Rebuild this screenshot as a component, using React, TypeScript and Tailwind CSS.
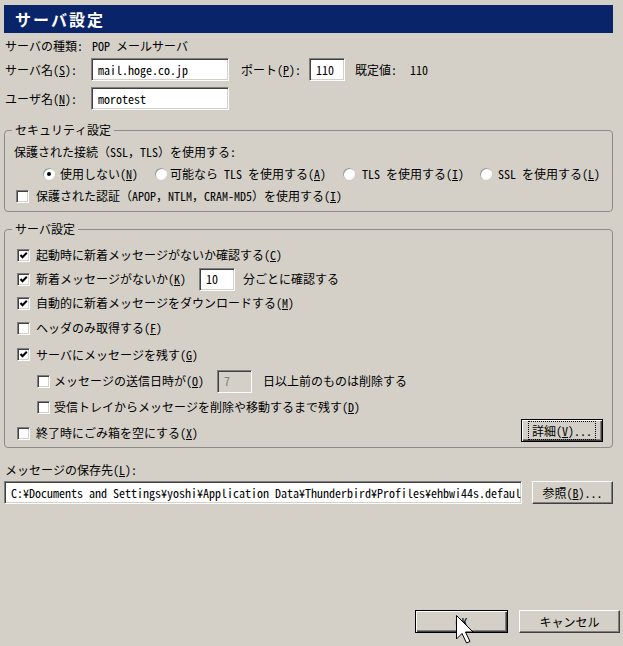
import React from "react"

function U({ children }: { children: React.ReactNode }) {
  return <span className="underline underline-offset-[1px]">{children}</span>
}

function Sunken({ className, children }: { className?: string; children?: React.ReactNode }) {
  return (
    <div
      className={
        "h-[23px] shrink-0 border border-t-[#808080] border-l-[#808080] border-r-white border-b-white shadow-[inset_1px_1px_0_#404040,inset_-1px_-1px_0_#d4d0c8] flex items-center px-[6px] overflow-hidden whitespace-nowrap " +
        (className || "")
      }
    >
      <span>{children}</span>
    </div>
  )
}

function Check({ on }: { on?: boolean }) {
  return (
    <span className="w-[13px] h-[13px] shrink-0 bg-white border border-t-[#808080] border-l-[#808080] border-r-white border-b-white shadow-[inset_1px_1px_0_#404040,inset_-1px_-1px_0_#d4d0c8] flex items-center justify-center">
      {on && (
        <svg width="9" height="9" viewBox="0 0 9 9">
          <polyline points="1.5,4 3.5,6.2 7.8,1.8" fill="none" stroke="#000" strokeWidth="2" />
        </svg>
      )}
    </span>
  )
}

function Radio({ on }: { on?: boolean }) {
  return (
    <span className="w-[12px] h-[12px] shrink-0 rounded-full bg-white flex items-center justify-center shadow-[inset_1px_1px_0_#9a9a9a,inset_-1px_-1px_0_#f4f4f4,0_0_1px_#bdbab0]">
      {on && <span className="w-[4px] h-[4px] rounded-full bg-black" />}
    </span>
  )
}

function Btn({ className, children, def }: { className?: string; children: React.ReactNode; def?: boolean }) {
  const look = def
    ? "border border-black shadow-[inset_1px_1px_0_#ffffff,inset_-1px_-1px_0_#404040,inset_-2px_-2px_0_#808080]"
    : "border border-t-white border-l-white border-r-[#404040] border-b-[#404040] shadow-[inset_-1px_-1px_0_#808080]"
  return (
    <div className={"h-[23px] shrink-0 bg-[#d4d0c8] flex items-center justify-center " + look + " " + (className || "")}>
      <span>{children}</span>
    </div>
  )
}

function Row({ className, children }: { className?: string; children: React.ReactNode }) {
  return <div className={"flex items-center whitespace-nowrap " + (className || "")}>{children}</div>
}

export default function App() {
  return (
    <div className="relative w-[623px] h-[646px] overflow-hidden bg-[#d4d0c8] pt-[5px] pl-[4px] pr-[10px] pb-[13px] flex flex-col text-[12px] leading-[14px] text-black font-['Noto_Sans_Mono_CJK_JP','Noto_Sans_CJK_JP',monospace]">
      <div className="h-[28px] shrink-0 bg-[#0a246a] flex items-center pl-[11px] text-white text-[16px] leading-[20px] font-bold tracking-[2px]">
        サーバ設定
      </div>

      <Row className="h-[20px] mt-[3px]">
        <span className="w-[88px] pl-[1px]">サーバの種類:</span>
        <span>POP メールサーバ</span>
      </Row>

      <Row className="mt-[2px]">
        <span className="w-[87px] pl-[1px]">
          サーバ名(<U>S</U>):
        </span>
        <Sunken className="w-[138px] bg-white">mail.hoge.co.jp</Sunken>
        <span className="ml-[12px] w-[68px]">
          ポート(<U>P</U>):
        </span>
        <Sunken className="w-[36px] bg-white">110</Sunken>
        <span className="ml-[10px]">既定値:</span>
        <span className="ml-[13px]">110</span>
      </Row>

      <Row className="mt-[6px]">
        <span className="w-[87px] pl-[1px]">
          ユーザ名(<U>N</U>):
        </span>
        <Sunken className="w-[138px] bg-white">morotest</Sunken>
      </Row>

      <fieldset className="mt-[12px] border border-[#8c8c8c] rounded-[4px] px-[9px] pb-[5px]">
        <legend className="ml-[-2px] px-[3px] leading-[16px]">セキュリティ設定</legend>
        <Row className="h-[20px] mt-[4px]">保護された接続（SSL，TLS）を使用する:</Row>
        <Row className="h-[20px] mt-[2px] pl-[29px]">
          <span className="w-[112px] flex items-center gap-[5px]">
            <Radio on />
            <span>
              使用しない(<U>N</U>)
            </span>
          </span>
          <span className="w-[188px] flex items-center gap-[3px]">
            <Radio />
            <span>
              可能なら TLS を使用する(<U>A</U>)
            </span>
          </span>
          <span className="w-[137px] flex items-center gap-[7px]">
            <Radio />
            <span>
              TLS を使用する(<U>I</U>)
            </span>
          </span>
          <span className="flex items-center gap-[6px]">
            <Radio />
            <span>
              SSL を使用する(<U>L</U>)
            </span>
          </span>
        </Row>
        <Row className="h-[20px] mt-[2px] pl-[2px] gap-[7px]">
          <Check />
          <span>
            保護された認証（APOP，NTLM，CRAM-MD5）を使用する(<U>I</U>)
          </span>
        </Row>
      </fieldset>

      <fieldset className="mt-[9px] border border-[#8c8c8c] rounded-[4px] px-[9px] pb-[1px]">
        <legend className="ml-[-2px] px-[3px] leading-[16px]">サーバ設定</legend>
        <Row className="h-[24px] mt-[6px] pl-[3px] gap-[6px]">
          <Check on />
          <span>
            起動時に新着メッセージがないか確認する(<U>C</U>)
          </span>
        </Row>
        <Row className="h-[24px] pl-[3px]">
          <Check on />
          <span className="ml-[6px]">
            新着メッセージがないか(<U>K</U>)
          </span>
          <Sunken className="ml-[13px] w-[36px] bg-white">10</Sunken>
          <span className="ml-[8px]">分ごとに確認する</span>
        </Row>
        <Row className="h-[24px] pl-[3px] gap-[6px]">
          <Check on />
          <span>
            自動的に新着メッセージをダウンロードする(<U>M</U>)
          </span>
        </Row>
        <Row className="h-[26px] pl-[3px] gap-[6px]">
          <Check />
          <span>
            ヘッダのみ取得する(<U>F</U>)
          </span>
        </Row>
        <Row className="h-[27px] pl-[3px] gap-[6px]">
          <Check on />
          <span>
            サーバにメッセージを残す(<U>G</U>)
          </span>
        </Row>
        <Row className="h-[26px] pl-[23px]">
          <Check />
          <span className="ml-[4px]">
            メッセージの送信日時が(<U>O</U>)
          </span>
          <Sunken className="ml-[13px] w-[35px] bg-[#d4d0c8] text-[#808080]">7</Sunken>
          <span className="ml-[11px]">日以上前のものは削除する</span>
        </Row>
        <Row className="h-[26px] pl-[23px] gap-[4px]">
          <Check />
          <span>
            受信トレイからメッセージを削除や移動するまで残す(<U>D</U>)
          </span>
        </Row>
        <Row className="h-[26px] pl-[3px] gap-[6px]">
          <Check />
          <span>
            終了時にごみ箱を空にする(<U>X</U>)
          </span>
          <Btn def className="ml-auto self-start mt-[-1px] w-[82px]">
            <span className="border border-dotted border-black px-[3px] leading-[13px]">
              詳細(<U>V</U>)...
            </span>
          </Btn>
        </Row>
      </fieldset>

      <Row className="h-[20px] mt-[12px] pl-[1px]">
        <span>
          メッセージの保存先(<U>L</U>):
        </span>
      </Row>
      <div className="flex items-end mt-[1px]">
        <Sunken className="w-[518px] h-[22px] bg-white px-[3px]">
          C:¥Documents and Settings¥yoshi¥Application Data¥Thunderbird¥Profiles¥ehbwi44s.defaul
        </Sunken>
        <Btn className="ml-[10px] w-[81px]">
          参照(<U>B</U>)...
        </Btn>
      </div>

      <div className="mt-auto flex ml-[411px] gap-[11px]">
        <Btn def className="w-[93px]">
          OK
        </Btn>
        <Btn className="w-[101px]">キャンセル</Btn>
      </div>

      <svg className="absolute left-[456px] top-[615px]" width="19" height="30" viewBox="0 0 19 30">
        <path
          d="M0.5 0.5 L0.5 24 L6 18.5 L10.5 28 L14 26.5 L9.5 17 L17 17 Z"
          fill="#ffffff"
          stroke="#000000"
          strokeWidth="1"
          strokeLinejoin="miter"
        />
      </svg>
    </div>
  )
}
